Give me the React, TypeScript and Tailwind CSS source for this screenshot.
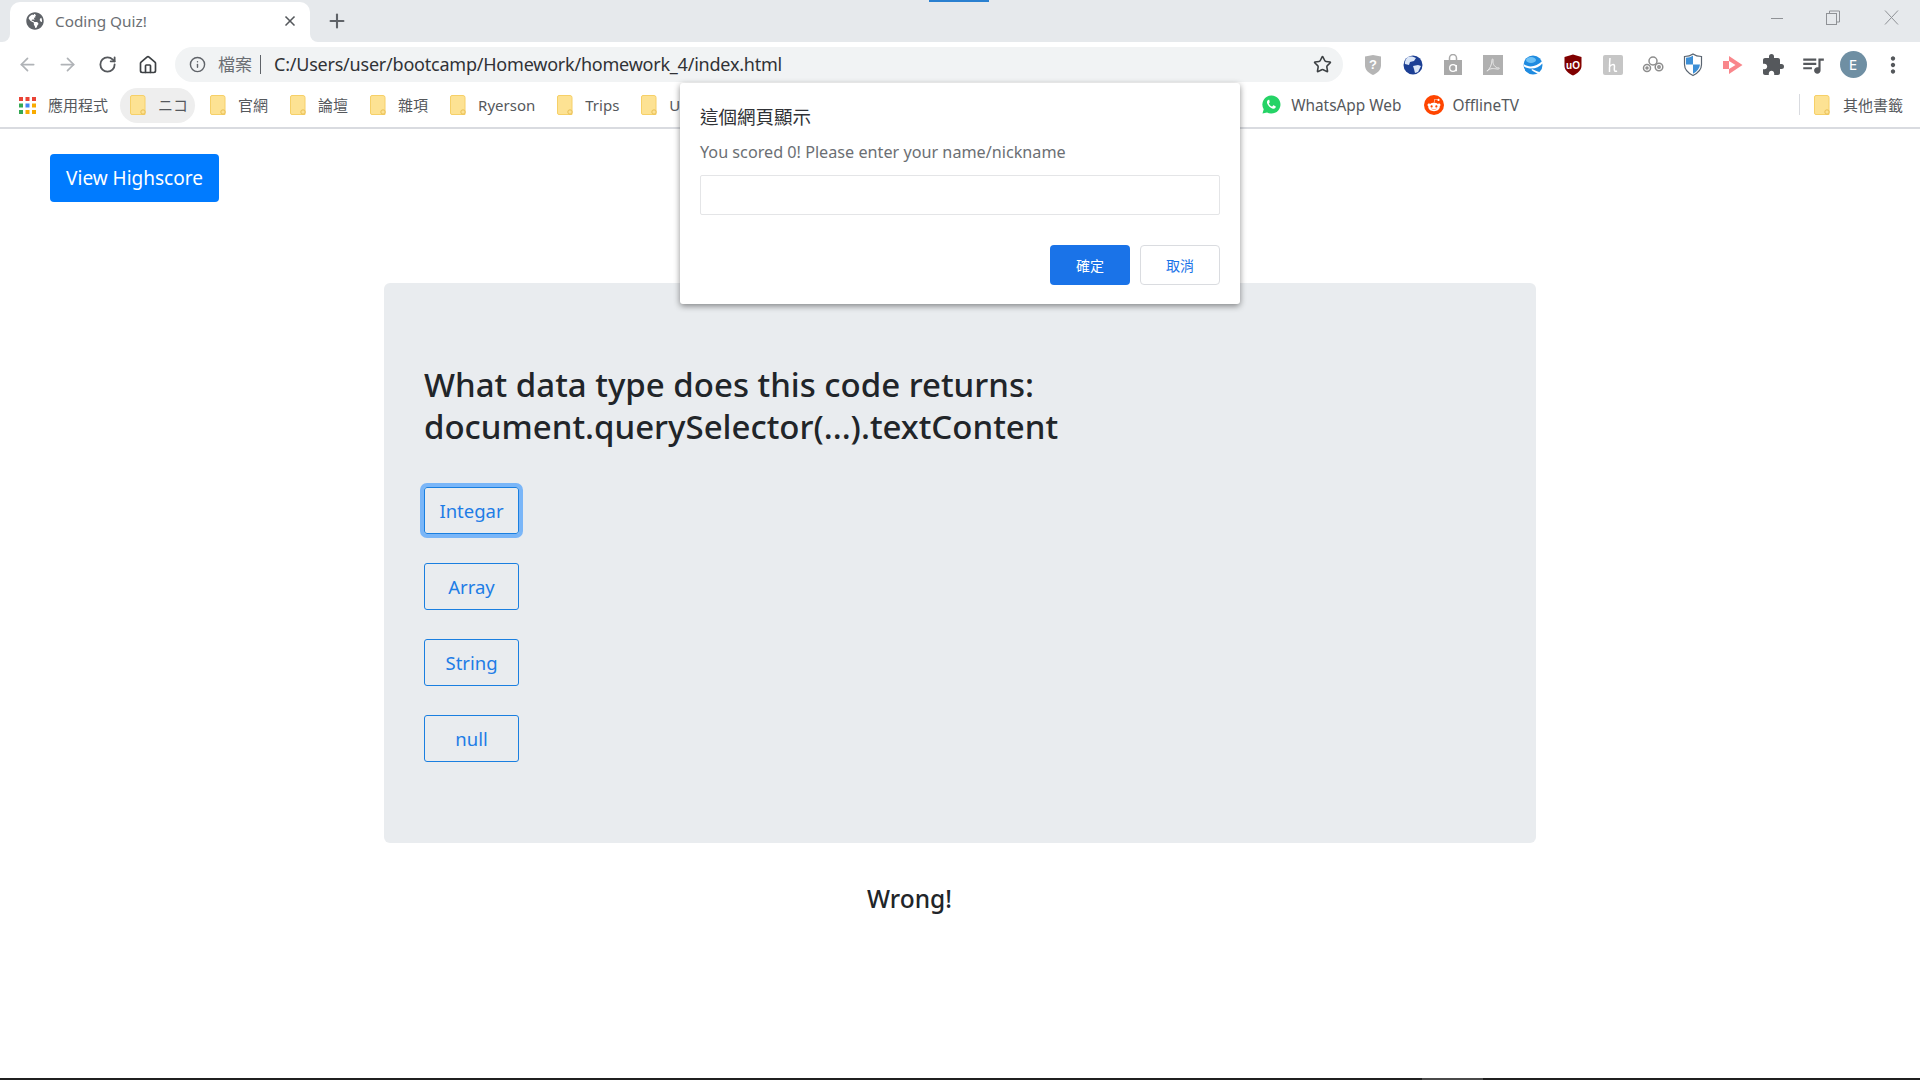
import { ArrowLeft, ArrowRight, RotateCw, Home, Info, Star, Plus, X } from 'lucide-react'
import { FaGlobeAmericas, FaRedditAlien } from 'react-icons/fa'
import { MdExtension, MdQueueMusic, MdMoreVert } from 'react-icons/md'

const font = 'font-["Noto_Sans","Noto_Sans_CJK_TC",sans-serif]'

function Folder() {
  return (
    <svg width="16" height="20" viewBox="0 0 16 20" className="shrink-0">
      <path d="M2 0.5h11a2 2 0 0 1 2 2V19.5H2a1.5 1.5 0 0 1-1.5-1.5V2A1.5 1.5 0 0 1 2 .5z" fill="#fde293" stroke="#f6d068" />
      <circle cx="13" cy="17" r="2.2" fill="#fde293" stroke="#e8bf55" />
    </svg>
  )
}

function AppsGrid() {
  const colors = ['#ea4335', '#ea4335', '#ea4335', '#34a853', '#4285f4', '#f9ab00', '#34a853', '#f9ab00', '#f9ab00']
  return (
    <svg width="17" height="17" viewBox="0 0 17 17">
      {colors.map((c, i) => (
        <rect key={i} x={(i % 3) * 6.5} y={Math.floor(i / 3) * 6.5} width="4" height="4" fill={c} />
      ))}
    </svg>
  )
}

function Bookmark({ label, active }: { label: string; active?: boolean }) {
  return (
    <div className={`flex h-[35px] items-center gap-[12px] rounded-full pl-[10px] ${active ? 'mr-[5px] bg-[#eeeeee] pr-[7px]' : 'mr-[2px] pr-[10px]'}`}>
      <Folder />
      <span className="whitespace-nowrap">{label}</span>
    </div>
  )
}

function WhatsappIcon() {
  return (
    <svg width="19" height="19" viewBox="0 0 20 20">
      <path d="M10 .5a9.500 9.500 0 1 1-4.700 17.800L.5 19.500l1.300-4.600A9.500 9.500 0 0 1 10 .5z" fill="#25d366" />
      <path d="M7.200 5c-.4 0-1 .2-1.400.8-.6.8-.8 2-.2 3.400.8 1.900 2.900 4.200 5.200 5 1.400.5 2.500.2 3.200-.5.500-.5.700-1.200.5-1.600l-2.200-1.200c-.3-.1-.5 0-.7.2l-.7.900c-.2.200-.4.200-.6.100-1.300-.6-2.300-1.600-3-2.900-.1-.2-.1-.4.100-.6l.6-.7c.1-.2.200-.4.100-.6L7.700 5.200C7.600 5.100 7.400 5 7.200 5z" fill="#fff" />
    </svg>
  )
}

// extension icons in the toolbar, in order
function HelpShield() {
  return (
    <svg width="20" height="22" viewBox="0 0 20 22">
      <path d="M2 2.500 10 1l8 1.500v9c0 4.500-3.500 7.500-8 9.500-4.500-2-8-5-8-9.500z" fill="#b5b5b5" />
      <text x="10" y="15" textAnchor="middle" fontSize="13" fontWeight="700" fill="#fff" fontFamily="Liberation Sans">?</text>
    </svg>
  )
}

function DarkGlobe() {
  return (
    <svg width="20" height="20" viewBox="0 0 20 20">
      <circle cx="10" cy="10" r="9.500" fill="#1c3f94" />
      <path d="M5 2c3-1 6 0 8 1l-2 3-4 1-1 3-4-1C1.500 7 3 3 5 2zM10 11l5-1 3 1-3 6-3 1-1-4z" fill="#dbe6f7" />
    </svg>
  )
}

function BagIcon() {
  return (
    <svg width="20" height="22" viewBox="0 0 20 22">
      <path d="M6.500 6V4a3.500 3.500 0 0 1 7 0v2" fill="none" stroke="#a9a9a9" strokeWidth="1.500" />
      <rect x="1" y="6" width="18" height="15" fill="#a9a9a9" />
      <circle cx="10" cy="14" r="3.300" fill="none" stroke="#fff" strokeWidth="1.300" />
      <path d="M13.300 11v6.300" stroke="#fff" strokeWidth="1.300" />
    </svg>
  )
}

function PdfIcon() {
  return (
    <svg width="20" height="20" viewBox="0 0 20 20">
      <rect width="20" height="20" fill="#b0b0b0" />
      <path d="M4 16c3-2 5-7 5-11 0-2 1.500-1 1 1-.5 3 2 7 6 7 1 0 0 1.500-2 1-3-.5-7-1-9 1.500-.5.500-1.500.500-1 .5z" fill="none" stroke="#e9e9e9" strokeWidth="1" />
    </svg>
  )
}

function BlueGlobe() {
  return (
    <svg width="20" height="20" viewBox="0 0 20 20">
      <circle cx="10" cy="10" r="9.500" fill="#1f8be0" />
      <ellipse cx="8" cy="5" rx="5" ry="3" fill="#6cc0f5" />
      <path d="M0.500 9C6 13 13 12 19.500 6l.3 2C15 14 7 15 1 11.500z" fill="#fff" />
      <path d="M9 14c3 1 6 3 8 3l-1.500 1.500c-2 0-5-2-7-3.500z" fill="#fff" />
    </svg>
  )
}

function UblockIcon() {
  return (
    <svg width="20" height="22" viewBox="0 0 20 22">
      <path d="M1.500 3 10 .5 18.500 3v9c0 4-4 7.500-8.500 9.500C5.500 19.500 1.500 16 1.500 12z" fill="#800000" />
      <text x="10" y="14.500" textAnchor="middle" fontSize="10" fontWeight="700" fill="#fff" fontFamily="Liberation Sans">uO</text>
    </svg>
  )
}

function HonIcon() {
  return (
    <svg width="20" height="20" viewBox="0 0 20 20">
      <rect width="20" height="20" rx="2" fill="#c6c6c6" />
      <path d="M7 3c-.5 5-.5 9-.5 14M6.500 12c1-2.500 5-3.500 5-1 0 2-.5 3 0 4.500.3 1 1.500 1 2.500.5" fill="none" stroke="#fff" strokeWidth="1.500" />
    </svg>
  )
}

function CirclesIcon() {
  return (
    <svg width="22" height="20" viewBox="0 0 22 20" fill="none" stroke="#8d8d8d" strokeWidth="1.500">
      <circle cx="5" cy="13" r="3.500" />
      <circle cx="11" cy="6" r="4" />
      <circle cx="17" cy="12" r="3.800" />
      <circle cx="17" cy="12" r="1.200" />
      <circle cx="5" cy="13" r="1" />
    </svg>
  )
}

function BlueShield() {
  return (
    <svg width="20" height="24" viewBox="0 0 20 24">
      <path d="M10 1c2 1.500 5 2.500 8.500 2.500v8c0 5-3.500 8.500-8.500 11-5-2.500-8.500-6-8.500-11v-8C5 3.500 8 2.500 10 1z" fill="#fff" stroke="#5a6470" strokeWidth="1.200" />
      <path d="M10 2.500v9H3V4.800c2.500 0 5-1 7-2.300zM10 11.500h7c-.3 4-3 7-7 9.300z" fill="#3d8fd6" />
    </svg>
  )
}

function RedArrow() {
  return (
    <svg width="20" height="20" viewBox="0 0 20 20">
      <rect x="0" y="6" width="6" height="8" fill="#f9868b" />
      <path d="M6 1 19.500 10 6 19v-5l6.500-4L6 6z" fill="#f9868b" />
    </svg>
  )
}

function ToolbarCell({ children }: { children: React.ReactNode }) {
  return <div className="flex h-[40px] w-[40px] items-center justify-center">{children}</div>
}

function AnswerButton({ label, focused }: { label: string; focused?: boolean }) {
  return (
    <button
      className={`h-[47px] w-[95px] rounded-[3px] border border-[#1a7fe0] text-[18.5px] text-[#1e7de6] ${focused ? 'shadow-[0_0_0_4px_#7ab6f8]' : ''}`}
    >
      {label}
    </button>
  )
}

export default function App() {
  return (
    <div className={`flex h-screen flex-col overflow-hidden bg-white ${font}`}>
      {/* Title bar */}
      <div className="relative flex h-[42px] shrink-0 items-end bg-[#e6e9ec] pl-[10px]">
        <div className="absolute left-[929px] top-0 h-[2px] w-[60px] bg-[#2a80d0]" />
        <div className="relative flex h-[40px] w-[300px] items-center rounded-t-[10px] bg-white pb-[2px] pl-[16px] pr-[12px]">
          <span className="absolute bottom-0 -left-[8px] h-[8px] w-[8px] bg-white">
            <span className="block h-full w-full rounded-br-[8px] bg-[#e6e9ec]" />
          </span>
          <span className="absolute bottom-0 -right-[8px] h-[8px] w-[8px] bg-white">
            <span className="block h-full w-full rounded-bl-[8px] bg-[#e6e9ec]" />
          </span>
          <FaGlobeAmericas size={18} className="shrink-0 text-[#5f6368]" />
          <span className="ml-[11px] flex-1 text-[15.300px] text-[#6b6f74]">Coding Quiz!</span>
          <X size={16} strokeWidth={2.500} className="text-[#55585c]" />
        </div>
        <div className="ml-[16px] flex h-[40px] items-center pb-[2px]">
          <Plus size={22} strokeWidth={2.300} className="text-[#5f6368]" />
        </div>
        <div className="ml-auto flex h-[40px] items-start pr-[21px] pt-[7px]">
          <svg width="128" height="18" viewBox="0 0 128 18" fill="none" stroke="#8f9296" strokeWidth="1">
            <path d="M0 9.500h12" />
            <rect x="55.500" y="4.500" width="10" height="11" />
            <path d="M58.500 4.500v-2.500h10v11h-3" />
            <path d="M114 1.500l13 14M127 1.500l-13 14" />
          </svg>
        </div>
      </div>

      {/* Toolbar */}
      <div className="flex h-[45px] shrink-0 items-center bg-white pl-[17px]">
        <ArrowLeft size={21} strokeWidth={2} className="text-[#b0b3b7]" />
        <ArrowRight size={21} strokeWidth={2} className="ml-[19px] text-[#b0b3b7]" />
        <RotateCw size={19} strokeWidth={2.300} className="ml-[20px] text-[#55585c]" />
        <Home size={20} strokeWidth={2} className="ml-[21px] text-[#3c4043]" />
        <div className="ml-[17px] flex h-[35px] w-[1168px] items-center rounded-full bg-[#f1f3f4] pl-[14px] pr-[11px]">
          <Info size={17} strokeWidth={2} className="shrink-0 text-[#5f6368]" />
          <span className="ml-[12px] text-[17px] text-[#6b6f74]">檔案</span>
          <span className="ml-[8px] h-[19px] w-px bg-[#5f6368]" />
          <span className="ml-[13px] flex-1 text-[18px] tracking-[-0.22px] text-[#303236]">C:/Users/user/bootcamp/Homework/homework_4/index.html</span>
          <Star size={19} strokeWidth={2} className="shrink-0 text-[#3c4043]" />
        </div>
        <div className="ml-[10px] flex items-center">
          <ToolbarCell><HelpShield /></ToolbarCell>
          <ToolbarCell><DarkGlobe /></ToolbarCell>
          <ToolbarCell><BagIcon /></ToolbarCell>
          <ToolbarCell><PdfIcon /></ToolbarCell>
          <ToolbarCell><BlueGlobe /></ToolbarCell>
          <ToolbarCell><UblockIcon /></ToolbarCell>
          <ToolbarCell><HonIcon /></ToolbarCell>
          <ToolbarCell><CirclesIcon /></ToolbarCell>
          <ToolbarCell><BlueShield /></ToolbarCell>
          <ToolbarCell><RedArrow /></ToolbarCell>
          <ToolbarCell><MdExtension size={24} className="text-[#55585c]" /></ToolbarCell>
          <ToolbarCell><MdQueueMusic size={26} className="text-[#55585c]" /></ToolbarCell>
          <ToolbarCell>
            <div className="flex h-[27px] w-[27px] items-center justify-center rounded-full bg-[#6f8fa3] text-[15px] text-white">E</div>
          </ToolbarCell>
          <ToolbarCell><MdMoreVert size={26} className="text-[#55585c]" /></ToolbarCell>
        </div>
      </div>

      {/* Bookmarks */}
      <div className="flex h-[42px] shrink-0 items-center border-b-2 border-[#d9dbe0] bg-white pb-[4px] pl-[19px] text-[15px] text-[#55585c]">
        <AppsGrid />
        <span className="ml-[12px] mr-[12px] whitespace-nowrap">應用程式</span>
        <Bookmark label="ニコ" active />
        <Bookmark label="官網" />
        <Bookmark label="論壇" />
        <Bookmark label="雜項" />
        <Bookmark label="Ryerson" />
        <Bookmark label="Trips" />
        <Bookmark label="U" />
        <div className="ml-auto flex items-center">
          <WhatsappIcon />
          <span className="ml-[10px] whitespace-nowrap pt-[2px] text-[15.400px]">WhatsApp Web</span>
          <span className="ml-[23px] flex h-[20px] w-[20px] items-center justify-center rounded-full bg-[#ff4500]">
            <FaRedditAlien size={14} className="text-white" />
          </span>
          <span className="ml-[8px] whitespace-nowrap pt-[2px] text-[15.400px]">OfflineTV</span>
          <span className="ml-[280px] h-[21px] w-px bg-[#d9dbe0]" />
          <span className="ml-[14px]"><Folder /></span>
          <span className="ml-[13px] mr-[17px] whitespace-nowrap">其他書籤</span>
        </div>
      </div>

      {/* Page */}
      <main className="flex-1 pt-[25px]">
        <button className="ml-[50px] h-[48px] w-[169px] rounded-[4px] bg-[#007bff] text-[19px] text-white">View Highscore</button>
        <div className="mx-auto mt-[81px] flex h-[560px] w-[1152px] flex-col items-start rounded-[6px] bg-[#e9ecef] px-[40px] pt-[81px]">
          <h1 className="text-[33px] leading-[42px] font-medium text-[#212529]">
            What data type does this code returns:
            <br />
            document.querySelector(...).textContent
          </h1>
          <div className="mt-[39px] flex flex-col gap-[29px]">
            <AnswerButton label="Integar" focused />
            <AnswerButton label="Array" />
            <AnswerButton label="String" />
            <AnswerButton label="null" />
          </div>
        </div>
        <div className="mx-auto mt-[38px] w-[1152px] pl-[483px] text-[24.500px] leading-[36px] font-medium text-[#212529]">Wrong!</div>
      </main>

      {/* Bottom edge of the window */}
      <div className="flex h-[2px] shrink-0 bg-[#202020]">
        <div className="ml-[1422px] h-full w-[61px] bg-[#4a4a4a]" />
      </div>

      {/* Prompt dialog */}
      <div className="absolute left-[680px] top-[83px] flex h-[221px] w-[560px] flex-col rounded-[3px] bg-white px-[20px] pt-[20px] shadow-[0_2px_6px_rgba(0,0,0,0.45)]">
        <div className="text-[18.500px] leading-[27px] text-[#303236]">這個網頁顯示</div>
        <div className="mt-[11px] text-[16.200px] leading-[22px] text-[#6b6f74]">You scored 0! Please enter your name/nickname</div>
        <input className="mt-[12px] h-[40px] w-full rounded-[2px] border border-[#e4e5e7] bg-white outline-none" />
        <div className="mt-[30px] flex justify-end gap-[10px]">
          <button className="h-[40px] w-[80px] rounded-[4px] bg-[#1a73e8] text-[14px] text-white">確定</button>
          <button className="h-[40px] w-[80px] rounded-[4px] border border-[#dadce0] bg-white text-[14px] text-[#1a73e8]">取消</button>
        </div>
      </div>
    </div>
  )
}
